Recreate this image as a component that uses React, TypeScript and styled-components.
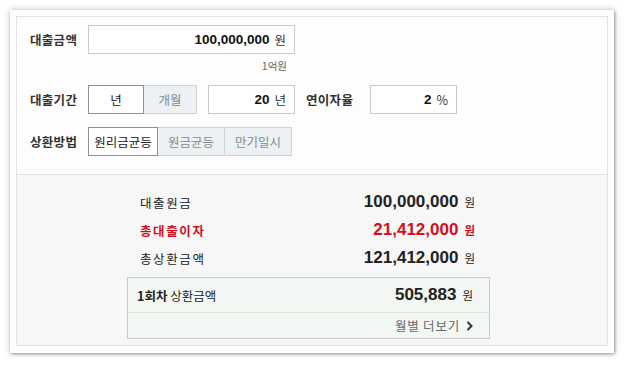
import React, { useState } from "react";
import styled, { createGlobalStyle } from "styled-components";

const Global = createGlobalStyle`
  html, body { margin: 0; padding: 0; background: #ffffff; }
  body { font-family: "Noto Sans CJK KR", "Noto Sans", sans-serif; color: #222; }
  * { box-sizing: border-box; }
`;

const Page = styled.div`
  width: 626px;
  height: 365px;
  padding: 10px 12px 12px 10px;
`;

const Card = styled.div`
  width: 604px;
  height: 343px;
  background: #ffffff;
  padding: 6px 6px 7px 6px;
  box-shadow: 1px 1px 3px rgba(0, 0, 0, 0.35), 0 0 7px rgba(0, 0, 0, 0.2);
`;

const Inner = styled.div`
  height: 100%;
  border: 1px solid #e3e3e3;
  display: flex;
  flex-direction: column;
`;

const Form = styled.div`
  background: #fdfdfd;
  border-bottom: 1px solid #e1e1e1;
  padding: 7px 0 18px 13px;
  display: flex;
  flex-direction: column;
`;

const Row = styled.div<{ $mt?: number }>`
  display: flex;
  align-items: center;
  margin-top: ${(p) => p.$mt ?? 0}px;
`;

const Label = styled.div<{ $w?: number; $ml?: number }>`
  width: ${(p) => p.$w ?? 58}px;
  margin-left: ${(p) => p.$ml ?? 0}px;
  font-size: 12.5px;
  font-weight: 700;
  color: #333;
  letter-spacing: 0.3px;
  flex-shrink: 0;
`;

const InputBox = styled.div<{ $w: number; $ml?: number }>`
  width: ${(p) => p.$w}px;
  height: 29px;
  margin-left: ${(p) => p.$ml ?? 0}px;
  border: 1px solid #c9c9c9;
  background: #ffffff;
  display: flex;
  align-items: center;
  justify-content: flex-end;
  padding-right: 8px;
  gap: 5px;
`;

const Num = styled.span<{ $size?: number }>`
  font-family: "Liberation Sans", Arial, sans-serif;
  font-weight: 700;
  font-size: ${(p) => p.$size ?? 13.5}px;
  color: #111;
`;

const Unit = styled.span`
  font-size: 12.5px;
  color: #333;
`;

const Hint = styled.div`
  width: 265px;
  height: 16px;
  margin-top: 4px;
  text-align: right;
  padding-right: 8px;
  font-size: 10.5px;
  color: #666;
  line-height: 16px;
`;

const Segs = styled.div`
  display: flex;
  height: 29px;
`;

const Seg = styled.button<{ $on?: boolean; $w: number }>`
  width: ${(p) => p.$w}px;
  height: 100%;
  margin: 0 0 0 -1px;
  padding: 0;
  font-family: inherit;
  font-size: 12.5px;
  color: ${(p) => (p.$on ? "#222" : "#8a8a8a")};
  background: ${(p) => (p.$on ? "#ffffff" : "#eef1f4")};
  border: 1px solid ${(p) => (p.$on ? "#8f8f8f" : "#cfd3d8")};
  position: relative;
  z-index: ${(p) => (p.$on ? 1 : 0)};
  cursor: pointer;
  &:first-child { margin-left: 0; }
`;

const Result = styled.div`
  flex: 1;
  background: #f7f7f7;
  padding: 13px 0 0 110px;
`;

const Summary = styled.div`
  width: 363px;
  padding: 0 15px 0 13px;
  margin-bottom: 5px;
`;

const SumRow = styled.div<{ $red?: boolean }>`
  height: 28px;
  display: flex;
  align-items: center;
  justify-content: space-between;
  color: ${(p) => (p.$red ? "#cf1020" : "#222")};
`;

const SumLabel = styled.span<{ $bold?: boolean }>`
  font-size: 12.5px;
  letter-spacing: 1.6px;
  font-weight: ${(p) => (p.$bold ? 700 : 400)};
`;

const SumValue = styled.span`
  display: flex;
  align-items: baseline;
  gap: 6px;
  color: inherit;
`;

const BigNum = styled.span`
  font-family: "Liberation Sans", Arial, sans-serif;
  font-weight: 700;
  font-size: 17px;
  color: inherit;
`;

const SmallUnit = styled.span<{ $bold?: boolean }>`
  font-size: 11.5px;
  font-weight: ${(p) => (p.$bold ? 700 : 400)};
  color: inherit;
`;

const Box = styled.div`
  width: 363px;
  border: 1px solid #c6ccc6;
  background: #f3f7f3;
`;

const BoxRow = styled.div<{ $h: number; $line?: boolean }>`
  height: ${(p) => p.$h}px;
  display: flex;
  align-items: center;
  justify-content: space-between;
  padding: 0 16px 0 9px;
  border-bottom: ${(p) => (p.$line ? "1px solid #dfe5df" : "none")};
`;

const BoxLabel = styled.span`
  font-size: 12.5px;
  color: #222;
  b { font-weight: 700; }
`;

const More = styled.a`
  margin-left: auto;
  display: flex;
  align-items: center;
  gap: 6px;
  font-size: 12.5px;
  color: #666;
  letter-spacing: 0.8px;
  text-decoration: none;
`;

export default function App() {
  const [unit, setUnit] = useState("년");
  const [method, setMethod] = useState("원리금균등");
  return (
    <>
      <Global />
      <Page>
        <Card>
          <Inner>
            <Form>
              <Row $mt={1}>
                <Label>대출금액</Label>
                <InputBox $w={207}>
                  <Num>100,000,000</Num>
                  <Unit>원</Unit>
                </InputBox>
              </Row>
              <Hint>1억원</Hint>
              <Row $mt={11}>
                <Label>대출기간</Label>
                <Segs>
                  {["년", "개월"].map((u) => (
                    <Seg key={u} $w={u === "년" ? 56 : 54} $on={unit === u} onClick={() => setUnit(u)}>
                      {u}
                    </Seg>
                  ))}
                </Segs>
                <InputBox $w={87} $ml={11}>
                  <Num>20</Num>
                  <Unit>년</Unit>
                </InputBox>
                <Label $w={64} $ml={11}>연이자율</Label>
                <InputBox $w={87}>
                  <Num>2</Num>
                  <Unit>%</Unit>
                </InputBox>
              </Row>
              <Row $mt={13}>
                <Label>상환방법</Label>
                <Segs>
                  {["원리금균등", "원금균등", "만기일시"].map((m) => (
                    <Seg key={m} $w={m === "원리금균등" ? 70 : 68} $on={method === m} onClick={() => setMethod(m)}>
                      {m}
                    </Seg>
                  ))}
                </Segs>
              </Row>
            </Form>
            <Result>
              <Summary>
                <SumRow>
                  <SumLabel>대출원금</SumLabel>
                  <SumValue>
                    <BigNum>100,000,000</BigNum>
                    <SmallUnit>원</SmallUnit>
                  </SumValue>
                </SumRow>
                <SumRow $red>
                  <SumLabel $bold>총대출이자</SumLabel>
                  <SumValue>
                    <BigNum>21,412,000</BigNum>
                    <SmallUnit $bold>원</SmallUnit>
                  </SumValue>
                </SumRow>
                <SumRow>
                  <SumLabel>총상환금액</SumLabel>
                  <SumValue>
                    <BigNum>121,412,000</BigNum>
                    <SmallUnit>원</SmallUnit>
                  </SumValue>
                </SumRow>
              </Summary>
              <Box>
                <BoxRow $h={35} $line>
                  <BoxLabel>
                    <b>1회차</b> 상환금액
                  </BoxLabel>
                  <SumValue>
                    <BigNum>505,883</BigNum>
                    <SmallUnit>원</SmallUnit>
                  </SumValue>
                </BoxRow>
                <BoxRow $h={25}>
                  <More href="#">
                    월별 더보기
                    <svg width="7" height="10" viewBox="0 0 7 10">
                      <path d="M1.5 1 L5.5 5 L1.5 9" fill="none" stroke="#333" strokeWidth="2" />
                    </svg>
                  </More>
                </BoxRow>
              </Box>
            </Result>
          </Inner>
        </Card>
      </Page>
    </>
  );
}
